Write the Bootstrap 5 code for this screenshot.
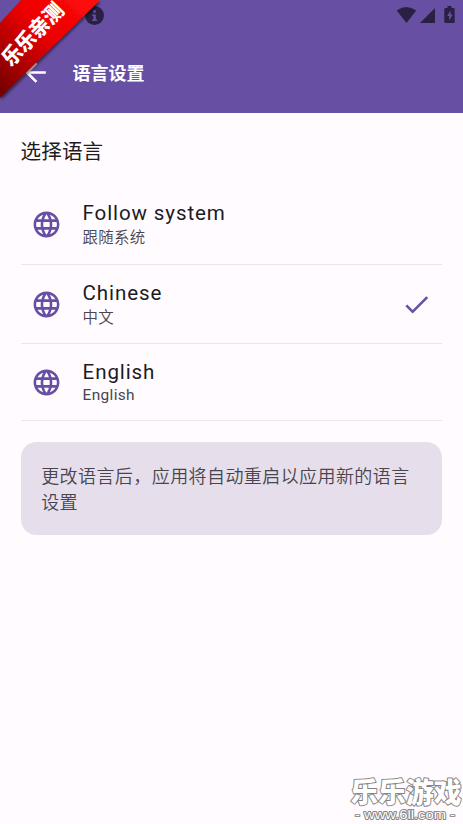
<!DOCTYPE html>
<html lang="zh-CN">
<head>
<meta charset="utf-8">
<meta name="viewport" content="width=device-width, initial-scale=1">
<title>语言设置</title>
<link href="https://cdn.jsdelivr.net/npm/bootstrap@5.3.0/dist/css/bootstrap.min.css" rel="stylesheet">
<style>
body{background:#fffbff;color:#1c1b1f;font-family:Roboto,"Noto Sans CJK SC",sans-serif;min-height:824px;overflow:hidden}
svg{display:block;flex-shrink:0}
.app-head{background:#6750a4;height:113px}
.status-row{height:32px;padding:0 7px 0 84px;color:#2a2044}
.title-row{height:81px;padding:0 20px}
.app-title{font-size:18px;line-height:26px;font-weight:700;color:#fff;margin-left:21.6px;padding-top:2px}
.page-main{padding:0 20.6px}
.section-title{font-size:20.57px;line-height:30px;letter-spacing:.1px;padding-top:24px;margin-bottom:18px}
.lang-list .list-group-item{background:transparent;border-color:#ebe5ec;border-width:0 0 1px;color:#1c1b1f;padding:0 10px;height:79px}
.lang-list .list-group-item:first-child{height:80px}
.lang-list .list-group-item:last-child{height:77px;border-bottom-width:1px}
.globe{fill:#6750a4;color:#6750a4}
.lang-copy{margin-left:21px}
.lang-name{font-size:20.57px;line-height:26px;letter-spacing:.87px}
.lang-sub{font-size:15.43px;line-height:22px;padding-top:1px;letter-spacing:.3px;color:#49454f;font-weight:350}
.lang-sub.latin{line-height:20px;padding-top:0;font-weight:400;letter-spacing:.35px}
.note{background:#e6dfeb;border-radius:15.5px;color:#49454f;font-size:18px;line-height:26px;letter-spacing:.42px;font-weight:350;margin-top:21px;height:93px;padding:22px 20px 19px 20.6px}
.ribbon{left:0;top:0}
.brand{right:0;bottom:0}
</style>
<script src="https://cdn.jsdelivr.net/npm/bootstrap@5.3.0/dist/js/bootstrap.bundle.min.js"></script>
</head>
<body class="position-relative">
<svg width="0" height="0" class="position-absolute" aria-hidden="true"><symbol id="globe" viewBox="0 0 24 24"><path d="M11.99 2C6.47 2 2 6.48 2 12s4.47 10 9.99 10C17.52 22 22 17.52 22 12S17.52 2 11.99 2zm6.93 6h-2.95c-.32-1.25-.78-2.45-1.38-3.56 1.84.63 3.37 1.91 4.33 3.56zM12 4.04c.83 1.2 1.48 2.53 1.91 3.96h-3.82c.43-1.43 1.08-2.76 1.91-3.96zM4.26 14C4.1 13.36 4 12.69 4 12s.1-1.36.26-2h3.38c-.08.66-.14 1.32-.14 2s.06 1.34.14 2H4.26zm.82 2h2.95c.32 1.25.78 2.45 1.38 3.56-1.84-.63-3.37-1.9-4.33-3.56zm2.95-8H5.08c.96-1.66 2.49-2.93 4.33-3.56C8.81 5.55 8.35 6.75 8.03 8zM12 19.96c-.83-1.2-1.48-2.53-1.91-3.96h3.82c-.43 1.43-1.08 2.76-1.91 3.96zM14.34 14H9.66c-.09-.66-.16-1.32-.16-2s.07-1.35.16-2h4.68c.09.65.16 1.32.16 2s-.07 1.34-.16 2zm.25 5.56c.6-1.11 1.06-2.31 1.38-3.56h2.95c-.96 1.65-2.49 2.93-4.33 3.56zM16.36 14c.08-.66.14-1.32.14-2s-.06-1.34-.14-2h3.38c.16.64.26 1.31.26 2s-.1 1.36-.26 2h-3.38z"/></symbol></svg>
<header class="app-head">
  <div class="status-row d-flex align-items-center">
    <svg width="20" height="20" viewBox="0 0 20 20"><circle cx="10.5" cy="9.5" r="9.5" fill="currentColor"/><path d="M9.200 4.300h2.600v2.500H9.200zM8.200 8.400h3.600v5h1.200v1.600H8.200v-1.600h1.200V10H8.200z" fill="#6750a4"/></svg>
    <svg class="ms-auto" width="59" height="20" viewBox="397 6 59 20" fill="currentColor"><path d="M396.700 10.500Q406.500 3.500 416.300 10.500L406.500 23Z"/><path d="M420 23H435V8Z"/><path d="M447.500 6h4v2h2q1.200 0 1.200 1.200v12.600q0 1.200-1.200 1.200h-8q-1.200 0-1.200-1.200V9.200Q444.300 8 445.500 8h2z"/><path d="M450.500 10.500l-3.300 5.500h2v4.800l3.500-6.300h-2.200z" fill="#6750a4"/></svg>
  </div>
  <div class="title-row d-flex align-items-center">
    <svg width="31" height="31" viewBox="0 0 24 24" fill="#fff"><path d="M20 11H7.830l5.590-5.590L12 4l-8 8 8 8 1.410-1.410L7.830 13H20z"/></svg>
    <h1 class="app-title mb-0">语言设置</h1>
  </div>
</header>
<main class="page-main">
  <h2 class="section-title fw-normal">选择语言</h2>
  <div class="lang-list list-group list-group-flush">
    <div class="list-group-item d-flex align-items-center">
      <svg class="globe" width="31" height="31"><use href="#globe"/></svg>
      <div class="lang-copy"><div class="lang-name">Follow system</div><div class="lang-sub">跟随系统</div></div>
    </div>
    <div class="list-group-item d-flex align-items-center">
      <svg class="globe" width="31" height="31"><use href="#globe"/></svg>
      <div class="lang-copy"><div class="lang-name">Chinese</div><div class="lang-sub">中文</div></div>
      <svg class="globe ms-auto" width="31" height="31" viewBox="0 0 24 24"><path d="M9 16.170L4.830 12l-1.420 1.410L9 19 21 7l-1.410-1.410z"/></svg>
    </div>
    <div class="list-group-item d-flex align-items-center">
      <svg class="globe" width="31" height="31"><use href="#globe"/></svg>
      <div class="lang-copy"><div class="lang-name">English</div><div class="lang-sub latin">English</div></div>
    </div>
  </div>
  <div class="note">更改语言后，应用将自动重启以应用新的语言设置</div>
</main>
<svg class="ribbon position-absolute" width="110" height="110" viewBox="0 0 110 110">
  <defs>
    <linearGradient id="red" gradientUnits="userSpaceOnUse" x1="85" y1="0" x2="0" y2="90"><stop offset="0" stop-color="#ff0808"/><stop offset=".4" stop-color="#ee0303"/><stop offset="1" stop-color="#760000"/></linearGradient>
    <filter id="shade" x="-20%" y="-20%" width="140%" height="140%"><feDropShadow dx="1" dy="2" stdDeviation="1.500" flood-color="#000" flood-opacity=".55"/></filter>
  </defs>
  <path d="M21 0H100L0 98V23Z" fill="url(#red)" filter="url(#shade)"/>
  <text transform="translate(11 67.500) rotate(-46)" font-family="Noto Sans CJK SC, sans-serif" font-size="21" font-weight="900" fill="#fff" textLength="78" lengthAdjust="spacingAndGlyphs">乐乐亲测</text>
</svg>
<svg class="brand position-absolute" width="115" height="50" viewBox="348 774 115 50" fill="#fff" stroke="#858585" paint-order="stroke" stroke-linejoin="round">
  <text x="350.500" y="803" font-family="Noto Sans CJK SC, sans-serif" font-size="28" font-weight="900" stroke-width="2" textLength="111" lengthAdjust="spacingAndGlyphs">乐乐游戏</text>
  <text x="355" y="819" font-family="Liberation Sans, sans-serif" font-size="12.500" font-weight="400" stroke-width="1.800" textLength="100" lengthAdjust="spacingAndGlyphs">- www.6ll.com -</text>
</svg>
</body>
</html>
